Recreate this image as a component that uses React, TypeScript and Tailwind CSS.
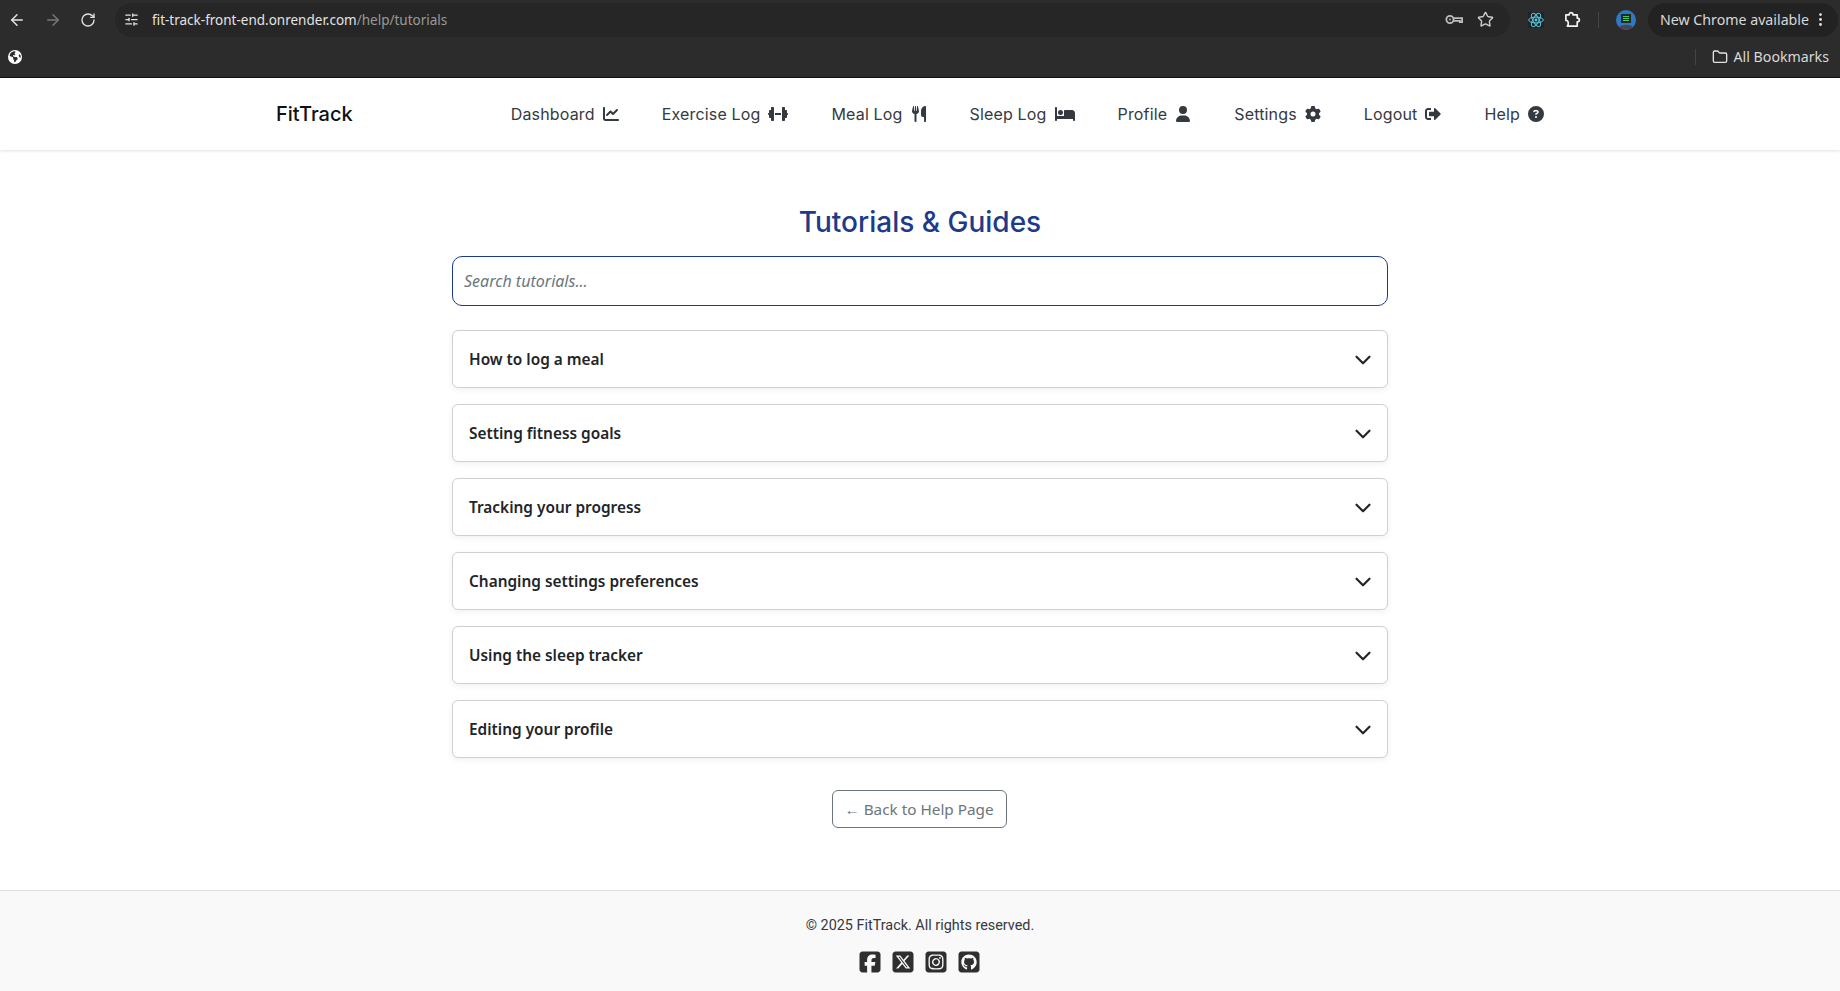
import { ArrowLeft, ArrowRight, RotateCw, SlidersHorizontal, Star, Folder, MoreVertical, ChevronDown } from "lucide-react";
import { FaSignOutAlt } from "react-icons/fa";
import {
  FaChartLine,
  FaDumbbell,
  FaUtensils,
  FaBed,
  FaUser,
  FaGear,
  FaCircleQuestion,
  FaEarthAmericas,
  FaSquareFacebook,
  FaSquareInstagram,
  FaSquareGithub,
  FaSquareXTwitter,
} from "react-icons/fa6";

const navLinks = [
  { label: "Dashboard", icon: <FaChartLine className="w-4 h-4" /> },
  { label: "Exercise Log", icon: <FaDumbbell className="w-5 h-4" /> },
  { label: "Meal Log", icon: <FaUtensils className="w-4 h-4" /> },
  { label: "Sleep Log", icon: <FaBed className="w-5 h-5" /> },
  { label: "Profile", icon: <FaUser className="w-4 h-4" /> },
  { label: "Settings", icon: <FaGear className="w-4 h-4" /> },
  { label: "Logout", icon: <FaSignOutAlt className="w-4 h-4" /> },
  { label: "Help", icon: <FaCircleQuestion className="w-4 h-4" /> },
];

const tutorials = [
  "How to log a meal",
  "Setting fitness goals",
  "Tracking your progress",
  "Changing settings preferences",
  "Using the sleep tracker",
  "Editing your profile",
];

const KeyIcon = () => (
  <svg viewBox="0 0 20 12" className="w-[18px] h-[11px]" fill="none" stroke="#bdbdbd" strokeWidth="2">
    <circle cx="5.5" cy="6" r="4" />
    <circle cx="5.5" cy="6" r="1" fill="#bdbdbd" stroke="none" />
    <path d="M9.5 4.5H19V9H16.5V7.5H9.5" />
  </svg>
);

const ReactIcon = () => (
  <div className="w-[16px] h-[16px] bg-[#20232a] flex items-center justify-center">
    <svg viewBox="-12 -12 24 24" className="w-[16px] h-[16px]" fill="none" stroke="#58c4dc" strokeWidth="1.5">
      <circle r="2.2" fill="#58c4dc" stroke="none" />
      <ellipse rx="11" ry="4.4" />
      <ellipse rx="11" ry="4.4" transform="rotate(60)" />
      <ellipse rx="11" ry="4.4" transform="rotate(120)" />
    </svg>
  </div>
);

const ExtensionIcon = () => (
  <svg viewBox="0 0 18 18" className="w-[17px] h-[17px]" fill="none" stroke="#f2f2f2" strokeWidth="1.8" strokeLinejoin="round">
    <path d="M2 4H5.5C5.5 1 9.5 1 9.5 4H14V7.5C17 7.5 17 11.5 14 11.5V16H3.5C5 14.5 5 11 3 10H2Z" />
  </svg>
);

const Avatar = () => (
  <svg viewBox="0 0 20 20" className="w-5 h-5">
    <circle cx="10" cy="10" r="10" fill="#2f78c4" />
    <path d="M3 17C6 14 14 14 17 17A10 10 0 0 1 3 17Z" fill="#4a4458" />
    <rect x="5" y="4" width="10" height="9" fill="#1d2b2a" />
    <path d="M7 6.5H13M7 8.5H13M7 10.5H13" stroke="#4fc56a" strokeWidth="1" />
  </svg>
);

const BrowserBar = () => (
  <div className="bg-[#2c2c2c] h-[78px] border-b border-[#111] font-['Noto_Sans',sans-serif]">
    <div className="flex items-center h-[39px]">
      <div className="flex items-center w-[115px] pl-[8px] gap-[18px]">
        <ArrowLeft className="w-[18px] h-[18px] text-[#e3e3e3]" />
        <ArrowRight className="w-[18px] h-[18px] text-[#777]" />
        <RotateCw className="w-[16px] h-[16px] text-[#e3e3e3]" />
      </div>
      <div className="flex items-center w-[1395px] h-[34px] rounded-full bg-[#262626] pl-[9px] pr-[16px]">
        <SlidersHorizontal className="w-[15px] h-[15px] text-[#e3e3e3]" />
        <span className="ml-[13px] pt-px text-[13.5px] text-[#e3e3e3]">
          fit-track-front-end.onrender.com<span className="text-[#999]">/help/tutorials</span>
        </span>
        <div className="ml-auto flex items-center gap-[14px]">
          <KeyIcon />
          <Star className="w-[17px] h-[17px] text-[#ccc]" />
        </div>
      </div>
      <div className="flex items-center ml-[18px] w-[120px]">
        <ReactIcon />
        <div className="ml-[20px]">
          <ExtensionIcon />
        </div>
        <div className="ml-[17px] w-px h-[16px] bg-[#444]" />
        <div className="ml-[17px]">
          <Avatar />
        </div>
      </div>
      <div className="flex items-center h-[34px] w-[190px] rounded-full bg-[#222222] pl-[12px] text-[14.2px] text-[#d8d8d8]">
        New Chrome available
        <MoreVertical className="ml-[3px] w-[17px] h-[17px] text-[#e3e3e3]" />
      </div>
    </div>
    <div className="flex items-center h-[36px] pl-[8px] pr-[11px]">
      <FaEarthAmericas className="w-[14px] h-[14px] text-white" />
      <div className="ml-auto w-px h-[16px] bg-[#444]" />
      <Folder className="ml-[16px] w-[16px] h-[16px] text-[#e3e3e3]" />
      <span className="ml-[6px] text-[14.2px] text-[#d8d8d8]">All Bookmarks</span>
    </div>
  </div>
);

const Navbar = () => (
  <nav className="h-[72px] bg-white shadow-[0_1px_3px_rgba(0,0,0,0.12)] relative">
    <div className="w-[1320px] mx-auto h-full px-4 flex items-center justify-between font-['Inter',sans-serif]">
      <span className="text-[20px] font-medium text-[#111]">FitTrack</span>
      <ul className="flex items-center gap-[43px] pr-[20px]">
        {navLinks.map((link) => (
          <li key={link.label} className="flex items-center gap-2 text-[16px] tracking-[0.01em] text-[#343a40]">
            {link.label}
            {link.icon}
          </li>
        ))}
      </ul>
    </div>
  </nav>
);

const Footer = () => (
  <footer className="h-[101px] bg-[#f9f9f9] border-t border-[#dedede] flex flex-col items-center pt-[25px]">
    <p className="text-[14.4px] text-[#343a40] font-['Roboto',sans-serif] leading-[20px]">© 2025 FitTrack. All rights reserved.</p>
    <div className="flex items-center gap-[9px] mt-[14px] mr-[2px] text-[#2f2f2f]">
      <FaSquareFacebook className="w-6 h-6" />
      <FaSquareXTwitter className="w-6 h-6" />
      <FaSquareInstagram className="w-6 h-6" />
      <FaSquareGithub className="w-6 h-6" />
    </div>
  </footer>
);

export default function App() {
  return (
    <div className="min-h-screen flex flex-col bg-white font-['Noto_Sans',sans-serif]">
      <BrowserBar />
      <Navbar />
      <main className="h-[740px] flex flex-col items-center">
        <h1 className="mt-[52px] text-[28px] leading-[40px] font-medium text-[#1e3a8a] font-['Inter',sans-serif]">Tutorials &amp; Guides</h1>
        <input
          placeholder="Search tutorials..."
          className="mt-[14px] w-[936px] h-[50px] px-[11px] border border-[#1e3a8a] rounded-[10px] text-[16px] italic outline-none placeholder:text-[#6c757d]"
        />
        <div className="mt-6 w-[936px] flex flex-col gap-4">
          {tutorials.map((title) => (
            <div
              key={title}
              className="h-[58px] pl-4 pr-[11px] flex items-center justify-between bg-white border border-[#d0d0d0] rounded-[6px] shadow-[0_2px_6px_rgba(0,0,0,0.06)]"
            >
              <span className="pt-px text-[15.4px] font-semibold text-[#212529]">{title}</span>
              <ChevronDown className="mt-px w-[26px] h-[26px] text-[#212529]" strokeWidth={2} />
            </div>
          ))}
        </div>
        <button className="mt-8 mr-[2px] h-[38px] w-[175px] border border-[#6c757d] rounded-[6px] text-[15.3px] text-[#6c757d]">
          ← Back to Help Page
        </button>
      </main>
      <Footer />
    </div>
  );
}
